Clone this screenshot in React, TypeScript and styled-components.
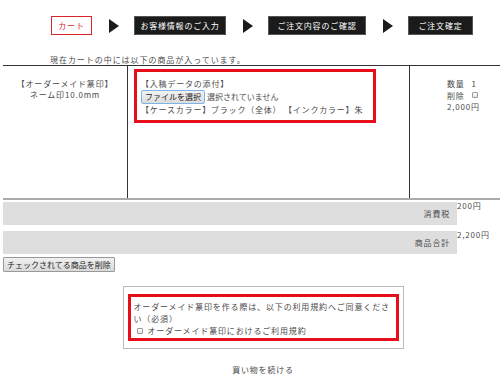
import React from "react";
import styled, { createGlobalStyle } from "styled-components";

const GlobalStyle = createGlobalStyle`
  html, body {
    margin: 0;
    padding: 0;
    overflow: hidden;
    background: #fff;
  }
  body {
    font-family: "Noto Sans CJK JP", "Liberation Sans", sans-serif;
    font-size: 8px;
    color: #4a4a4a;
  }
`;

const Page = styled.div`
  width: 520px;
  padding: 16px 0 0 3px;
`;

const Steps = styled.div`
  display: flex;
  align-items: center;
  padding-left: 48px;
  height: 19px;
`;

const Step = styled.div<{ $active?: boolean; $w: number }>`
  width: ${(p) => p.$w}px;
  height: 19px;
  box-sizing: border-box;
  display: flex;
  align-items: center;
  justify-content: center;
  letter-spacing: 0.8px;
  font-size: 8px;
  border: 1px solid ${(p) => (p.$active ? "#d9262b" : "#555")};
  background: ${(p) => (p.$active ? "#fff" : "#1b1b1b")};
  color: ${(p) => (p.$active ? "#d9262b" : "#fff")};
`;

const Arrow = styled.div`
  width: 0;
  height: 0;
  border-top: 7.5px solid transparent;
  border-bottom: 7.5px solid transparent;
  border-left: 10px solid #1b1b1b;
  margin: 0 15px 0 17px;
`;

const Lead = styled.p`
  margin: 20px 0 0 47px;
  letter-spacing: 0.95px;
  line-height: 10px;
`;

const CartTable = styled.div`
  display: grid;
  grid-template-columns: 124px 282px 1fr;
  border-top: 1px solid #333;
  border-bottom: 2px solid #aaa;
  min-height: 132px;
`;

const Cell = styled.div<{ $divider?: boolean }>`
  border-left: ${(p) => (p.$divider ? "1px solid #333" : "none")};
  line-height: 11.5px;
  letter-spacing: 0.8px;
`;

const NameCell = styled(Cell)`
  padding-top: 12px;
  line-height: 11px;
  text-align: center;
`;

const OptionCell = styled(Cell)`
  padding: 3px 0 0 6px;
`;

const RedBox = styled.div`
  border: 3px solid #e60e19;
  padding: 6px 4px 4px 4px;
  width: 228px;
`;

const Line = styled.div`
  line-height: 12px;
  white-space: nowrap;
`;

const FileRow = styled.div`
  display: flex;
  align-items: center;
  gap: 2px;
  height: 14px;
  letter-spacing: 0;
`;

const FileButton = styled.button`
  height: 14px;
  padding: 0 3px;
  font-family: inherit;
  font-size: 8px;
  color: #222;
  border: 1px solid #7eb4ea;
  border-radius: 2px;
  background: linear-gradient(#f2f2f2, #dcdcdc);
  line-height: 12px;
`;

const QtyCell = styled(Cell)`
  padding: 12px 0 0 37px;
`;

const QtyRow = styled.div`
  display: flex;
  gap: 7px;
  align-items: center;
  line-height: 11.5px;
`;

const TinyCheck = styled.input.attrs({ type: "checkbox" })`
  appearance: none;
  margin: 0;
  width: 6px;
  height: 6px;
  border: 1px solid #9a9a9a;
  background: linear-gradient(#fff, #e4e4e4);
  border-radius: 1px;
`;

const Totals = styled.div`
  margin-top: 2px;
  display: flex;
  flex-direction: column;
  gap: 6px;
`;

const TotalRow = styled.div`
  display: grid;
  grid-template-columns: 454px 1fr;
  letter-spacing: 0.8px;
`;

const TotalLabel = styled.div`
  background: #dedede;
  height: 23px;
  display: flex;
  align-items: center;
  justify-content: flex-end;
  padding-right: 7px;
  box-sizing: border-box;
`;

const TotalValue = styled.div`
  line-height: 8px;
`;

const DeleteButton = styled.button`
  margin-top: 3px;
  height: 15px;
  padding: 0 3px;
  font-family: inherit;
  font-size: 8px;
  color: #222;
  border: 1px solid #999;
  border-radius: 1px;
  background: linear-gradient(#f0f0f0, #dadada);
  line-height: 12px;
  display: block;
`;

const AgreeWrap = styled.div`
  display: flex;
  justify-content: center;
  margin-top: 14px;
`;

const AgreeBox = styled.div`
  width: 281px;
  box-sizing: border-box;
  border: 1px solid #bbb;
  padding: 7px 4px 7px 4px;
`;

const AgreeInner = styled.div`
  border: 3px solid #e60e19;
  padding: 4px 3px 1px 3px;
  line-height: 11.5px;
  letter-spacing: 0.85px;
`;

const AgreeCheck = styled.label`
  display: flex;
  align-items: center;
  gap: 5px;
  padding-left: 3px;
  margin-top: 1px;
`;

const Continue = styled.div`
  text-align: center;
  margin-top: 15px;
  letter-spacing: 0.8px;
`;

export default function App() {
  return (
    <>
      <GlobalStyle />
      <Page>
        <Steps>
          <Step $active $w={41}>カート</Step>
          <Arrow />
          <Step $w={92}>お客様情報のご入力</Step>
          <Arrow />
          <Step $w={98}>ご注文内容のご確認</Step>
          <Arrow />
          <Step $w={65}>ご注文確定</Step>
        </Steps>

        <Lead>現在カートの中には以下の商品が入っています。</Lead>

        <CartTable>
          <NameCell>
            <div>【オーダーメイド篆印】</div>
            <div>ネーム印10.0mm</div>
          </NameCell>
          <OptionCell $divider>
            <RedBox>
              <Line>【入稿データの添付】</Line>
              <FileRow>
                <FileButton type="button">ファイルを選択</FileButton>
                <span>選択されていません</span>
              </FileRow>
              <Line>【ケースカラー】ブラック（全体） 【インクカラー】朱</Line>
            </RedBox>
          </OptionCell>
          <QtyCell $divider>
            <QtyRow>
              <span>数量</span>
              <span>1</span>
            </QtyRow>
            <QtyRow>
              <span>削除</span>
              <TinyCheck />
            </QtyRow>
            <div>2,000円</div>
          </QtyCell>
        </CartTable>

        <Totals>
          <TotalRow>
            <TotalLabel>消費税</TotalLabel>
            <TotalValue>200円</TotalValue>
          </TotalRow>
          <TotalRow>
            <TotalLabel>商品合計</TotalLabel>
            <TotalValue>2,200円</TotalValue>
          </TotalRow>
        </Totals>

        <DeleteButton type="button">チェックされてる商品を削除</DeleteButton>

        <AgreeWrap>
          <AgreeBox>
            <AgreeInner>
              <div>オーダーメイド篆印を作る際は、以下の利用規約へご同意ください（必須）</div>
              <AgreeCheck>
                <TinyCheck />
                <span>オーダーメイド篆印におけるご利用規約</span>
              </AgreeCheck>
            </AgreeInner>
          </AgreeBox>
        </AgreeWrap>

        <Continue>買い物を続ける</Continue>
      </Page>
    </>
  );
}
